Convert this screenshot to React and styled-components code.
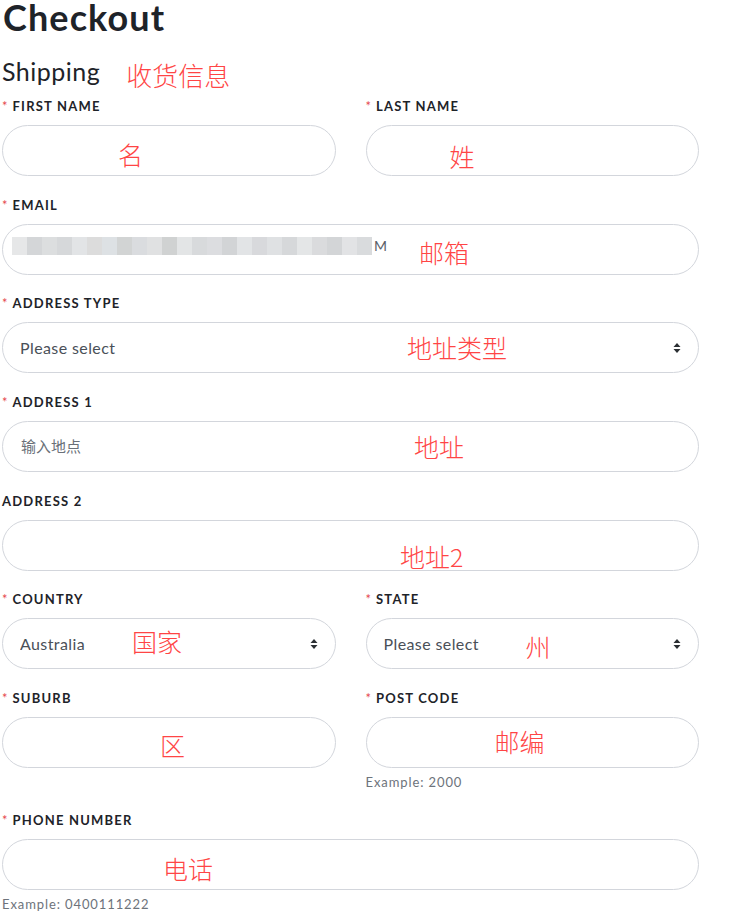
import React from 'react';
import styled, { createGlobalStyle } from 'styled-components';

const GlobalStyle = createGlobalStyle`
  body {
    margin: 0;
    background: #fff;
    font-family: Lato, "Noto Sans CJK SC", sans-serif;
    color: #1e2329;
  }
`;

const Page = styled.div`
  width: 697px;
  padding: 0 30px 0 2px;
`;

const Title = styled.h1`
  margin: 0 0 0 1px;
  font-size: 36px;
  line-height: 34px;
  font-weight: 700;
  letter-spacing: 1.1px;
  color: #1e2329;
`;

const SectionRow = styled.div`
  display: flex;
  align-items: center;
  gap: 26px;
  margin-top: 18px;
  height: 38px;
`;

const SectionTitle = styled.h2`
  margin: 0;
  font-size: 25px;
  font-weight: 400;
  letter-spacing: 0.5px;
  color: #1e2329;
`;

const Note = styled.span`
  font-family: "Noto Sans CJK SC", sans-serif;
  font-weight: 300;
  font-size: ${p => p.$size || 25}px;
  line-height: 1;
  color: #ff4545;
  white-space: nowrap;
`;

const HeadNote = styled(Note)`
  position: relative;
  top: 4px;
`;

const FloatNote = styled(Note)`
  position: absolute;
  left: ${p => p.$x}px;
  top: ${p => p.$y}px;
  pointer-events: none;
`;

const Grid = styled.div`
  display: grid;
  grid-template-columns: 1fr 1fr;
  column-gap: 30px;
  margin-top: 8px;
`;

const Field = styled.div`
  grid-column: ${p => (p.$wide ? '1 / span 2' : 'auto')};
  display: flex;
  flex-direction: column;
  margin-bottom: ${p => (p.$helper ? 23 : 20.67)}px;
`;

const Label = styled.label`
  display: flex;
  align-items: center;
  height: 16px;
  margin-bottom: 11px;
  font-size: 13px;
  font-weight: 700;
  letter-spacing: 1.2px;
  text-transform: uppercase;
  color: #1e2329;
`;

const Star = styled.span`
  color: #e5484d;
  font-size: 13px;
  font-weight: 400;
  margin-right: 5px;
  letter-spacing: 0;
`;

const Control = styled.div`
  position: relative;
  height: 51px;
`;

const Input = styled.input`
  box-sizing: border-box;
  width: 100%;
  height: 100%;
  border: 1px solid #d3d6dc;
  border-radius: 26px;
  padding: 0 18px;
  font-family: Lato, "Noto Sans CJK SC", sans-serif;
  font-size: 15px;
  color: #3f454c;
  background: #fff;
  outline: none;
  &::placeholder {
    color: #6a7078;
  }
`;

const Select = styled.select`
  box-sizing: border-box;
  width: 100%;
  height: 100%;
  border: 1px solid #d3d6dc;
  border-radius: 26px;
  padding: 0 40px 0 17px;
  font-family: Lato, sans-serif;
  font-size: 16px;
  letter-spacing: 0.4px;
  color: #4a5058;
  background: #fff;
  appearance: none;
  outline: none;
`;

const Arrow = styled.svg`
  position: absolute;
  right: 18px;
  top: 50%;
  margin-top: -6px;
  width: 8px;
  height: 12px;
  pointer-events: none;
`;

const Helper = styled.div`
  margin-top: 6px;
  height: 15px;
  font-size: 13px;
  letter-spacing: 0.9px;
  color: #6d737b;
`;

const Mosaic = styled.div`
  position: absolute;
  left: 10px;
  top: 13px;
  display: flex;
  align-items: center;
  pointer-events: none;
`;

const Cell = styled.span`
  width: 15px;
  height: 18px;
  background: ${p => p.$c};
`;

const MosaicEnd = styled.span`
  margin-left: 2px;
  font-size: 14px;
  color: #5a6068;
`;

const mosaicColors = [
  '#e6e7e8', '#d4d6d8', '#dcdedf', '#d6d8da', '#e2e4e6', '#dcdcdc',
  '#dde1e4', '#d2d4d4', '#dadcdf', '#e0e1e2', '#d0d2d2', '#e3e5e6',
  '#d8dadc', '#dcdde0', '#d2d4d6', '#e2e4e6', '#d8d9dc', '#dfe1e3',
  '#d6d8da', '#e4e6e7', '#dadbdd', '#d3d5d7', '#e2e3e5', '#d9dbdd',
];

const SelectArrow = () => (
  <Arrow viewBox="0 0 8 12">
    <path d="M4 1 L7.5 5 L0.5 5 Z" fill="#2b2f33" />
    <path d="M4 11 L7.5 7 L0.5 7 Z" fill="#2b2f33" />
  </Arrow>
);

function FormField({ label, required, wide, helper, note, children }) {
  return (
    <Field $wide={wide} $helper={!!helper}>
      <Label>
        {required && <Star>*</Star>}
        {label}
      </Label>
      <Control>
        {children}
        {note && (
          <FloatNote $x={note.x} $y={note.y}>{note.text}</FloatNote>
        )}
      </Control>
      {helper && <Helper>{helper}</Helper>}
    </Field>
  );
}

export default function App() {
  return (
    <Page>
      <GlobalStyle />
      <Title>Checkout</Title>
      <SectionRow>
        <SectionTitle>Shipping</SectionTitle>
        <HeadNote $size={26}>收货信息</HeadNote>
      </SectionRow>
      <Grid>
        <FormField label="First name" required note={{ text: '名', x: 116, y: 17 }}>
          <Input readOnly />
        </FormField>
        <FormField label="Last name" required note={{ text: '姓', x: 84, y: 19 }}>
          <Input readOnly />
        </FormField>

        <FormField label="Email" required wide note={{ text: '邮箱', x: 417, y: 16 }}>
          <Input readOnly />
          <Mosaic>
            {mosaicColors.map((c, i) => (
              <Cell key={i} $c={c} />
            ))}
            <MosaicEnd>M</MosaicEnd>
          </Mosaic>
        </FormField>

        <FormField label="Address type" required wide note={{ text: '地址类型', x: 405, y: 13 }}>
          <Select defaultValue="">
            <option value="">Please select</option>
          </Select>
          <SelectArrow />
        </FormField>

        <FormField label="Address 1" required wide note={{ text: '地址', x: 412, y: 13 }}>
          <Input readOnly placeholder="输入地点" />
        </FormField>

        <FormField label="Address 2" wide note={{ text: '地址2', x: 398, y: 24 }}>
          <Input readOnly />
        </FormField>

        <FormField label="Country" required note={{ text: '国家', x: 130, y: 11 }}>
          <Select defaultValue="AU">
            <option value="AU">Australia</option>
          </Select>
          <SelectArrow />
        </FormField>
        <FormField label="State" required note={{ text: '州', x: 160, y: 16 }}>
          <Select defaultValue="">
            <option value="">Please select</option>
          </Select>
          <SelectArrow />
        </FormField>

        <FormField label="Suburb" required note={{ text: '区', x: 158, y: 16 }}>
          <Input readOnly />
        </FormField>
        <FormField label="Post code" required helper="Example: 2000" note={{ text: '邮编', x: 129, y: 12 }}>
          <Input readOnly />
        </FormField>

        <FormField label="Phone number" required wide helper="Example: 0400111222" note={{ text: '电话', x: 161, y: 17 }}>
          <Input readOnly />
        </FormField>
      </Grid>
    </Page>
  );
}
